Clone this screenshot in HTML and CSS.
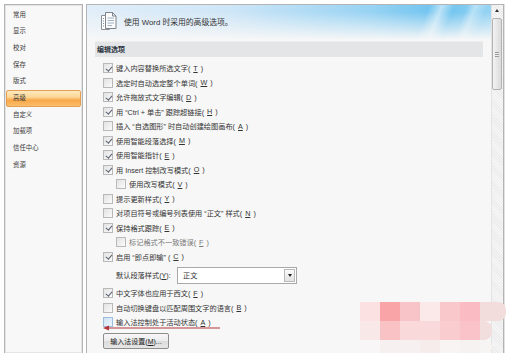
FILE: index.html
```html
<!DOCTYPE html>
<html lang="zh-CN">
<head>
    <meta charset="UTF-8">
    <title>Word 选项 - 高级</title>
    <link rel="stylesheet" href="styles.css">
</head>
<body>
    <div class="options-dialog">
        <!-- Левое меню -->
        <ul class="nav">
            <li>常用</li>
            <li>显示</li>
            <li>校对</li>
            <li>保存</li>
            <li>版式</li>
            <li class="active">高级</li>
            <li>自定义</li>
            <li>加载项</li>
            <li>信任中心</li>
            <li>资源</li>
        </ul>

        <!-- Панель настроек -->
        <div class="panel">
            <div class="panel-body">
                <div class="banner">
                    <svg class="banner-icon" width="17" height="19" viewBox="0 0 17 19">
                        <path d="M1.5 3.5h8v14h-8z" fill="#fff" stroke="#8c9198"/>
                        <path d="M3 6.5h1M3 9h1M3 11.5h1M3 14h1" stroke="#7a8ea6"/>
                        <path d="M5.5 0.5h7l3.5 3.5v12.5h-10.5z" fill="#fbfbfb" stroke="#7d838b"/>
                        <path d="M12.5 0.5v3.5h3.5" fill="none" stroke="#7d838b"/>
                        <path d="M7.5 6h6.5M7.5 8.5h6.5M7.5 11h6.5M7.5 13.5h4.5" stroke="#9fb2c6"/>
                    </svg>
                    <span>使用 Word 时采用的高级选项。</span>
                </div>

                <div class="section-title">编辑选项</div>

                <div class="opts">
                    <div class="opt"><span class="cb checked"></span>键入内容替换所选文字(<u>T</u>)</div>
                    <div class="opt"><span class="cb"></span>选定时自动选定整个单词(<u>W</u>)</div>
                    <div class="opt"><span class="cb checked"></span>允许拖放式文字编辑(<u>D</u>)</div>
                    <div class="opt"><span class="cb checked"></span>用 “Ctrl + 单击” 跟踪超链接(<u>H</u>)</div>
                    <div class="opt"><span class="cb"></span>插入 “自选图形” 时自动创建绘图画布(<u>A</u>)</div>
                    <div class="opt"><span class="cb checked"></span>使用智能段落选择(<u>M</u>)</div>
                    <div class="opt"><span class="cb checked"></span>使用智能指针(<u>E</u>)</div>
                    <div class="opt"><span class="cb checked"></span>用 Insert 控制改写模式(<u>O</u>)</div>
                    <div class="opt indent"><span class="cb"></span>使用改写模式(<u>V</u>)</div>
                    <div class="opt"><span class="cb"></span>提示更新样式(<u>Y</u>)</div>
                    <div class="opt"><span class="cb"></span>对项目符号或编号列表使用 “正文” 样式(<u>N</u>)</div>
                    <div class="opt"><span class="cb checked"></span>保持格式跟踪(<u>E</u>)</div>
                    <div class="opt indent disabled"><span class="cb"></span>标记格式不一致错误(<u>F</u>)</div>
                    <div class="opt"><span class="cb checked"></span>启用 “即点即输” (<u>C</u>)</div>

                    <div class="opt-select">
                        <span class="select-label">默认段落样式(<u>Y</u>):</span>
                        <div class="select">
                            <span>正文</span>
                            <span class="select-btn"></span>
                        </div>
                    </div>

                    <div class="opt"><span class="cb checked"></span>中文字体也应用于西文(<u>F</u>)</div>
                    <div class="opt"><span class="cb"></span>自动切换键盘以匹配周围文字的语言(<u>B</u>)</div>
                    <div class="opt marked">
                        <span class="cb hover"></span>输入法控制处于活动状态(<u>A</u>)
                        <!-- красная стрелка-пометка -->
                        <svg class="mark-arrow" width="118" height="6" viewBox="0 0 118 6">
                            <path d="M4 3H117" stroke="#b5343a" stroke-width="1"/>
                            <path d="M0 3L6 0.5V5.5z" fill="#b5343a"/>
                        </svg>
                    </div>

                    <button class="btn">输入法设置(<u>M</u>)...</button>
                </div>
            </div>

            <div class="scrollbar">
                <div class="sb-up"></div>
                <div class="sb-thumb"><span class="sb-grip"></span></div>
            </div>
        </div>

        <!-- Мозаика водяного знака -->
        <div class="mosaic">
            <i style="background:#fbe1e1"></i><i style="background:#f9a4a6"></i><i style="background:#f9c4c7"></i><i style="background:#fbe9e9"></i><i style="background:#f9c8cb"></i><i style="background:#fabcc2"></i><i class="tail" style="background:#f3dcdc"></i>
            <i style="background:#f9e8e8"></i><i style="background:#f9c3c6"></i><i style="background:#f9d9d9"></i><i style="background:#f9d9d9"></i><i style="background:#f9cdd0"></i><i style="background:#f9c3c9"></i><i class="tail short" style="background:#f3dede"></i>
            <i style="background:#f8f6f6"></i><i style="background:#f7f0f0"></i><i style="background:#f7f0f0"></i><i style="background:#f7ecec"></i><i style="background:#f8f4f4"></i><i style="background:#f7f2f2"></i><i class="tail short" style="background:#f7f4f4"></i>
        </div>
    </div>
</body>
</html>
```

FILE: styles.css
```css
* {
    box-sizing: border-box;
}

body {
    margin: 0;
    width: 506px;
    height: 353px;
    overflow: hidden;
    background: #fff;
    color: #333;
    font-family: "Liberation Sans", "Noto Sans CJK SC", sans-serif;
    text-autospace: no-autospace;
}

u {
    text-decoration: underline;
    text-underline-offset: 1px;
}

.options-dialog {
    position: relative;
    display: flex;
    gap: 3px;
    height: 353px;
    padding: 4px 2px 0 4px;
}

/* Левое меню */
.nav {
    list-style: none;
    margin: 0;
    width: 79px;
    flex: none;
    padding: 1.7px 1px 0;
    background: #f8f8f8;
    border: 1px solid #b4b4b4;
    border-bottom: none;
    box-shadow: inset 0 0 0 1px #e4e4e4;
    font-size: 6.4px;
    color: #3a3a3a;
}

.nav li {
    height: 16.67px;
    line-height: 16.67px;
    padding-left: 7px;
}

.nav li.active {
    line-height: 14.67px;
    padding-left: 6px;
    border: 1px solid #e3a052;
    border-radius: 2px;
    background: linear-gradient(#fde9c0 0%, #fcd796 40%, #f9a849 62%, #fbbd6c 100%);
}

/* Панель */
.panel {
    flex: 1;
    display: flex;
    background: #f7f7f7;
    border: 1px solid #b4b4b4;
    border-bottom: none;
    box-shadow: 1px 0 0 #e2e2e2;
}

.panel-body {
    flex: 1;
    min-width: 0;
}

.banner {
    height: 35px;
    display: flex;
    align-items: center;
    gap: 7px;
    padding: 0 0 2px 13px;
    font-size: 7.8px;
    color: #333;
    background:
        linear-gradient(to bottom, rgba(247,247,247,0) 20%, #f7f7f7 100%),
        linear-gradient(112deg, rgba(255,255,255,0) 82%, rgba(255,255,255,.55) 85%, rgba(255,255,255,0) 88%, rgba(255,255,255,0) 91%, rgba(255,255,255,.4) 93%, rgba(255,255,255,0) 96%),
        linear-gradient(to right, #e2eef9 0%, #cfe6f7 35%, #98d3f3 70%, #6cc2ef 88%, #97d4f3 100%);
}

.banner-icon {
    flex: none;
}

.section-title {
    margin: 1px 8px 0;
    height: 16px;
    line-height: 16px;
    padding-left: 2px;
    font-size: 7px;
    font-weight: bold;
    color: #2c3440;
    background: #e3e5e7;
    border-top: 1px solid #eceef0;
}

.opts {
    padding: 4px 0 0 16px;
}

.opt {
    position: relative;
    display: flex;
    align-items: center;
    gap: 3px;
    height: 14.5px;
    font-size: 7.2px;
    white-space: nowrap;
    color: #333;
}

.opt.indent {
    padding-left: 13px;
}

.opt.disabled {
    color: #7a7a7a;
}

.cb {
    position: relative;
    flex: none;
    width: 10px;
    height: 10px;
    border: 1px solid #b9b9b9;
    background: linear-gradient(135deg, #e2e2e2, #fbfbfb);
}

.cb.checked::after {
    content: "";
    position: absolute;
    left: 2.5px;
    top: 0.5px;
    width: 2.5px;
    height: 5px;
    border: solid #5a6270;
    border-width: 0 1.1px 1.1px 0;
    transform: rotate(40deg);
}

.cb.hover {
    border-color: #9dbddc;
    background: linear-gradient(135deg, #cde2f4, #eef6fd);
}

.mark-arrow {
    position: absolute;
    left: 0;
    top: 9.5px;
}

/* Выпадающий список */
.opt-select {
    display: flex;
    align-items: center;
    height: 22px;
    padding-left: 13px;
    font-size: 7.2px;
    white-space: nowrap;
}

.select-label {
    width: 61px;
}

.select {
    display: flex;
    align-items: center;
    justify-content: space-between;
    width: 120px;
    height: 17px;
    padding: 0 1px 0 5px;
    background: #fff;
    border: 1px solid #a9a9a9;
}

.select-btn {
    position: relative;
    width: 11px;
    height: 13px;
    border: 1px solid #b9b9b9;
    background: linear-gradient(#fbfbfb, #e2e2e2);
}

.select-btn::after {
    content: "";
    position: absolute;
    left: 2.5px;
    top: 4.5px;
    border: 2.5px solid transparent;
    border-top: 3px solid #222;
}

.btn {
    display: block;
    margin-top: 3.5px;
    width: 66px;
    height: 16px;
    padding: 0;
    font-family: inherit;
    font-size: 7px;
    color: #222;
    border: 1px solid #8e8e8e;
    border-radius: 2px;
    background: linear-gradient(#f7f7f7 0%, #ececec 50%, #dcdcdc 51%, #e6e6e6 100%);
}

/* Полоса прокрутки */
.scrollbar {
    width: 12px;
    flex: none;
    display: flex;
    flex-direction: column;
    border-left: 1px solid #e3e3e3;
    background: repeating-linear-gradient(45deg, #ececec 0 1px, #f6f6f6 1px 2px);
}

.sb-up {
    position: relative;
    height: 12px;
}

.sb-up::after {
    content: "";
    position: absolute;
    left: 3px;
    top: 4px;
    border: 2.5px solid transparent;
    border-bottom: 3px solid #333;
    border-top: none;
}

.sb-thumb {
    display: flex;
    align-items: center;
    justify-content: center;
    height: 72px;
    margin: 1px 1px 0 0;
    border: 1px solid #b3b3b3;
    border-radius: 2px;
    background: linear-gradient(to right, #f3f3f3, #dadada);
}

.sb-grip {
    width: 4px;
    height: 5px;
    background: repeating-linear-gradient(#9a9a9a 0 1px, #eee 1px 2px);
}

/* Мозаика */
.mosaic {
    position: absolute;
    left: 360px;
    top: 302px;
    display: grid;
    grid-template-columns: repeat(6, 20px) 26px;
    grid-template-rows: 19px 19px 14px;
}

.mosaic i {
    display: block;
}

.mosaic .tail {
    border-radius: 0 8px 8px 0;
}

.mosaic .tail.short {
    margin-right: 14px;
}
```
